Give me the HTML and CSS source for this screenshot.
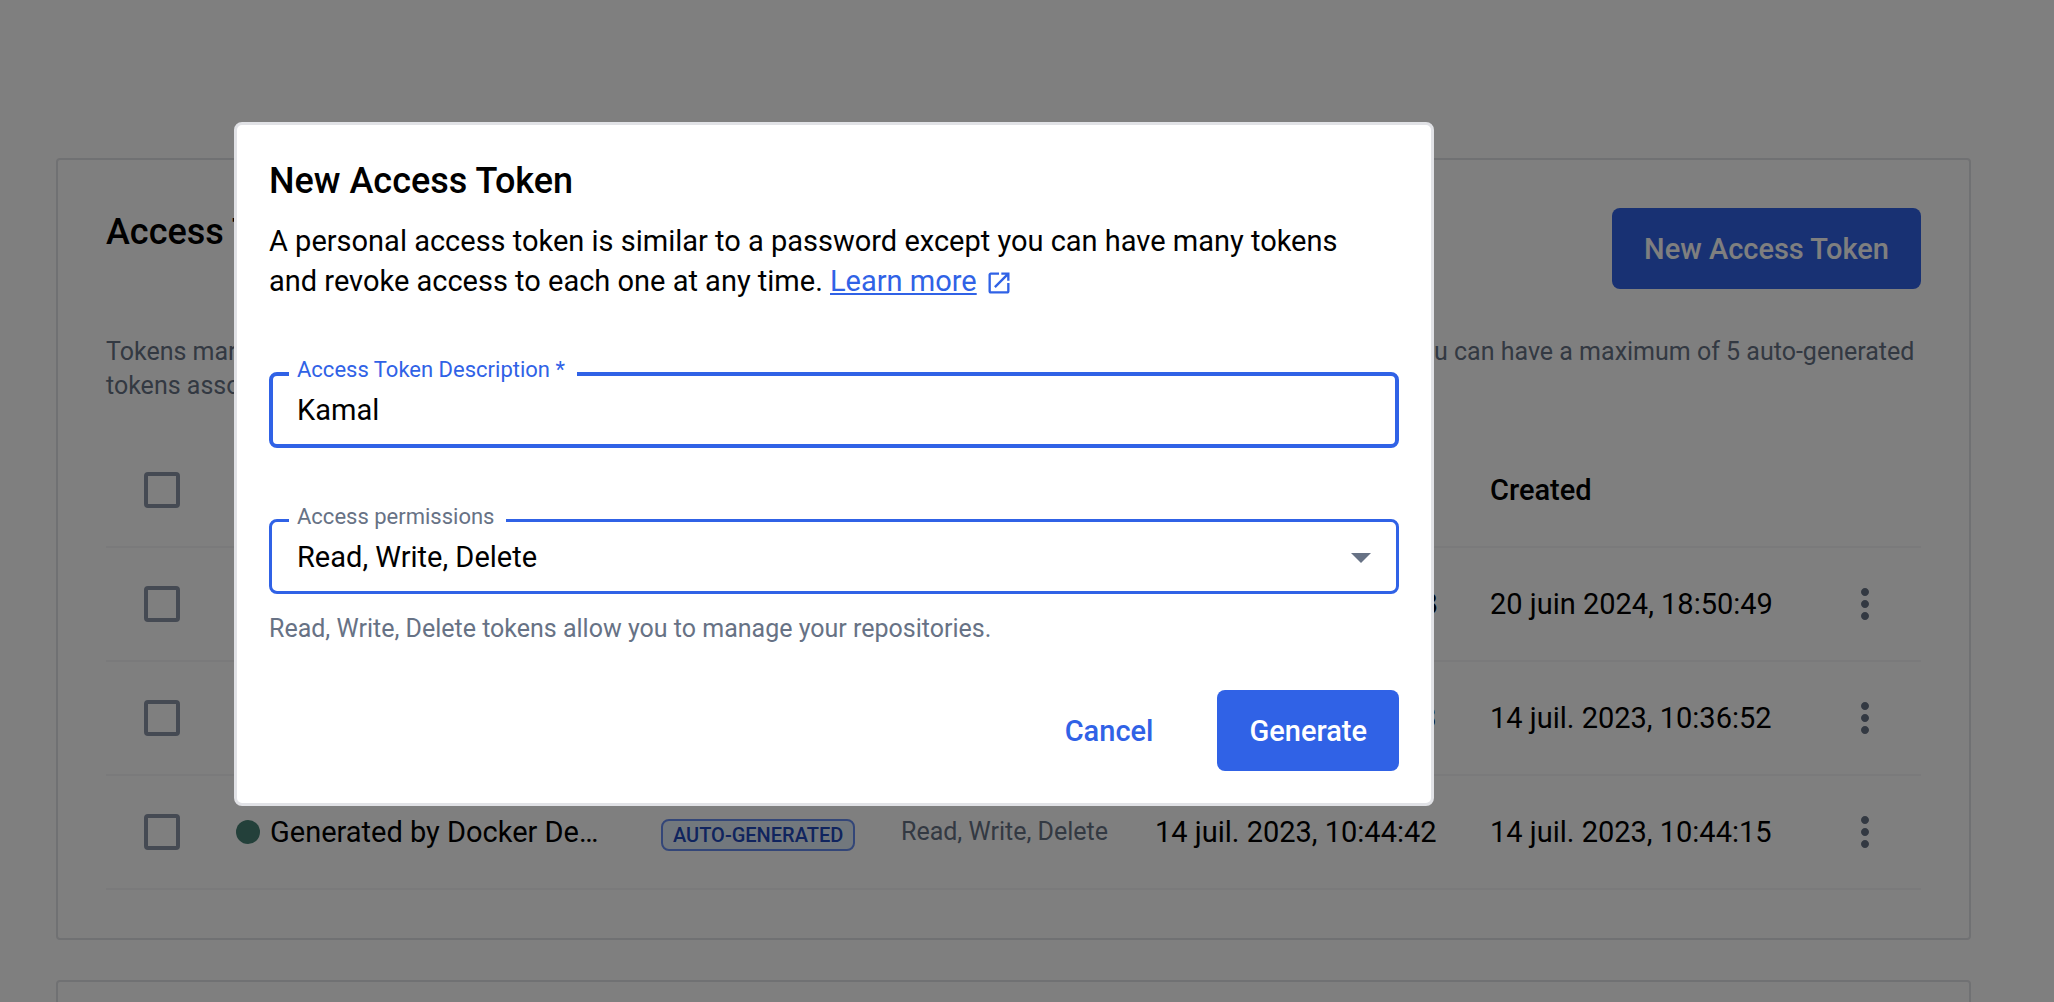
FILE: index.html
```html
<!DOCTYPE html>
<html lang="en">
<head>
<meta charset="utf-8">
<meta name="viewport" content="width=device-width, initial-scale=1">
<title>Access Tokens</title>
<link rel="stylesheet" href="styles.css">
</head>
<body>
<main class="page">
  <section class="card">
    <header class="card-header">
      <h2 class="title">Access Tokens</h2>
      <button class="button button-primary" type="button">New Access Token</button>
    </header>
    <p class="card-text">Tokens marked as auto-generated are created once you sign in through Docker Desktop or the Docker command line. You can have a maximum of 5 auto-generated tokens associated with your account.</p>
    <table class="tokens">
      <colgroup>
        <col class="col-check"><col class="col-name"><col class="col-source"><col class="col-scope"><col class="col-used"><col class="col-created"><col class="col-menu">
      </colgroup>
      <thead>
        <tr>
          <th><input class="check" type="checkbox" aria-label="Select all tokens"></th>
          <th>Description</th>
          <th>Source</th>
          <th>Scope</th>
          <th>Last Used</th>
          <th>Created</th>
          <th></th>
        </tr>
      </thead>
      <tbody>
        <tr>
          <td><input class="check" type="checkbox" aria-label="Select token"></td>
          <td><div class="name"><span class="dot"></span><span class="name-text">kamal</span></div></td>
          <td></td>
          <td class="scope">Read, Write, Delete</td>
          <td>20 juin 2024, 18:52:18</td>
          <td>20 juin 2024, 18:50:49</td>
          <td><button class="menu" type="button" aria-label="Token actions"><svg viewBox="0 0 24 24" width="48" height="48"><path d="M12 8c1.1 0 2-.9 2-2s-.9-2-2-2-2 .9-2 2 .9 2 2 2zm0 2c-1.1 0-2 .9-2 2s.9 2 2 2 2-.9 2-2-.9-2-2-2zm0 6c-1.1 0-2 .9-2 2s.9 2 2 2 2-.9 2-2-.9-2-2-2z"/></svg></button></td>
        </tr>
        <tr>
          <td><input class="check" type="checkbox" aria-label="Select token"></td>
          <td><div class="name"><span class="dot"></span><span class="name-text">Generated by Docker Desktop</span></div></td>
          <td><span class="badge">AUTO-GENERATED</span></td>
          <td class="scope">Read, Write, Delete</td>
          <td>14 juil. 2023, 10:36:53</td>
          <td>14 juil. 2023, 10:36:52</td>
          <td><button class="menu" type="button" aria-label="Token actions"><svg viewBox="0 0 24 24" width="48" height="48"><path d="M12 8c1.1 0 2-.9 2-2s-.9-2-2-2-2 .9-2 2 .9 2 2 2zm0 2c-1.1 0-2 .9-2 2s.9 2 2 2 2-.9 2-2-.9-2-2-2zm0 6c-1.1 0-2 .9-2 2s.9 2 2 2 2-.9 2-2-.9-2-2-2z"/></svg></button></td>
        </tr>
        <tr>
          <td><input class="check" type="checkbox" aria-label="Select token"></td>
          <td><div class="name"><span class="dot"></span><span class="name-text">Generated by Docker Desktop</span></div></td>
          <td><span class="badge">AUTO-GENERATED</span></td>
          <td class="scope">Read, Write, Delete</td>
          <td>14 juil. 2023, 10:44:42</td>
          <td>14 juil. 2023, 10:44:15</td>
          <td><button class="menu" type="button" aria-label="Token actions"><svg viewBox="0 0 24 24" width="48" height="48"><path d="M12 8c1.1 0 2-.9 2-2s-.9-2-2-2-2 .9-2 2 .9 2 2 2zm0 2c-1.1 0-2 .9-2 2s.9 2 2 2 2-.9 2-2-.9-2-2-2zm0 6c-1.1 0-2 .9-2 2s.9 2 2 2 2-.9 2-2-.9-2-2-2z"/></svg></button></td>
        </tr>
      </tbody>
    </table>
  </section>
  <section class="card"></section>
</main>

<div class="backdrop">
  <form class="dialog" role="dialog" aria-modal="true" aria-labelledby="dialog-title">
    <h2 class="title" id="dialog-title">New Access Token</h2>
    <p class="dialog-text">A personal access token is similar to a password except you can have many tokens and revoke access to each one at any time. <a class="link" href="#"><span class="link-text">Learn more</span><svg class="link-icon" viewBox="0 0 24 24" width="28" height="28"><path d="M19 19H5V5h7V3H5c-1.11 0-2 .9-2 2v14c0 1.100.89 2 2 2h14c1.100 0 2-.9 2-2v-7h-2v7zM14 3v2h3.590l-9.830 9.830 1.410 1.410L19 6.410V10h2V3h-7z"/></svg></a></p>
    <div class="field field-focused">
      <label class="label" for="description">Access Token Description *</label>
      <input class="control" id="description" type="text" value="Kamal">
    </div>
    <div class="field">
      <label class="label" for="permissions">Access permissions</label>
      <select class="control" id="permissions">
        <option>Read, Write, Delete</option>
        <option>Read, Write</option>
        <option>Read-only</option>
      </select>
      <svg class="arrow" viewBox="0 0 24 24" width="48" height="48"><path d="M7 10l5 5 5-5z"/></svg>
    </div>
    <p class="helper">Read, Write, Delete tokens allow you to manage your repositories.</p>
    <div class="actions">
      <button class="button button-text" type="button">Cancel</button>
      <button class="button button-primary" type="submit">Generate</button>
    </div>
  </form>
</div>
</body>
</html>
```
FILE: styles.css
```css
:root {
  --blue: #3062e6;
  --muted: #677285;
  --line: #e1e2e6;
}

* {
  box-sizing: border-box;
}

html,
body {
  margin: 0;
  height: 100%;
}

body {
  overflow: hidden;
  background: #fff;
  color: #000;
  font: 400 29px/40px Roboto, "Liberation Sans", sans-serif;
}

.page {
  display: flex;
  flex-direction: column;
  gap: 40px;
  padding: 158px 83px 0 56px;
}

.card {
  padding: 48px;
  border: 2px solid var(--line);
  border-radius: 4px;
}

.card-header {
  display: flex;
  align-items: flex-start;
  justify-content: space-between;
}

.title {
  margin: 0;
  font-size: 36px;
  font-weight: 500;
  line-height: 48px;
}

.button {
  height: 81px;
  padding: 0 32px;
  border: 0;
  border-radius: 8px;
  font: inherit;
  font-weight: 500;
}

.button-primary {
  background: var(--blue);
  color: #fff;
}

.button-text {
  background: none;
  color: var(--blue);
}

.card-text {
  margin: 46px 0 30px;
  color: var(--muted);
  font-size: 25px;
  line-height: 34px;
}

.tokens {
  width: 100%;
  table-layout: fixed;
  border-collapse: collapse;
}

.col-check { width: 130px; }
.col-name { width: 425px; }
.col-source { width: 240px; }
.col-scope { width: 254px; }
.col-used { width: 335px; }
.col-created { width: 326px; }

.tokens th,
.tokens td {
  height: 114px;
  padding: 0;
  border-bottom: 2px solid #f4f4f6;
  text-align: left;
  white-space: nowrap;
  font-weight: 400;
}

.tokens th {
  font-weight: 500;
}

.tokens td.scope {
  color: var(--muted);
  font-size: 25px;
}

.check {
  appearance: none;
  display: block;
  width: 36px;
  height: 36px;
  margin: 0 0 0 38px;
  border: 4px solid #8b95a7;
  border-radius: 4px;
}

.name {
  display: flex;
  align-items: center;
  gap: 10px;
  max-width: 366px;
}

.dot {
  flex: none;
  width: 24px;
  height: 24px;
  border-radius: 50%;
  background: #478075;
}

.name-text {
  overflow: hidden;
  text-overflow: ellipsis;
}

.badge {
  display: inline-block;
  padding: 0 10px;
  border: 2px solid #668cf0;
  border-radius: 8px;
  background: #e5f0fa;
  color: #2048bc;
  font-size: 20px;
  font-weight: 500;
  line-height: 28px;
}

.menu {
  display: block;
  width: 48px;
  height: 48px;
  margin-left: 25px;
  padding: 0;
  border: 0;
  background: none;
  fill: var(--muted);
}

.backdrop {
  position: fixed;
  inset: 0;
  padding: 122px 32px 0 234px;
  background: rgba(0, 0, 0, 0.5);
}

.dialog {
  max-width: 1200px;
  padding: 32px;
  border: 3px solid var(--line);
  border-radius: 8px;
  background: #fff;
}

.dialog-text {
  margin: 16px 0 71px;
  padding-right: 32px;
}

.link {
  color: var(--blue);
  text-decoration: none;
}

.link-text {
  text-decoration: underline;
}

.link-icon {
  margin-left: 8px;
  fill: currentColor;
  vertical-align: -6px;
}

.field {
  position: relative;
  margin-bottom: 18px;
}

.field-focused {
  margin-bottom: 71px;
}

.control {
  appearance: none;
  display: block;
  width: 100%;
  height: 75px;
  padding: 0 25px;
  border: 3px solid var(--blue);
  border-radius: 8px;
  outline: 0;
  background: #fff;
  color: inherit;
  font: inherit;
}

.field-focused .control {
  height: 76px;
  padding: 0 24px;
  border-width: 4px;
}

.label {
  position: absolute;
  top: -16px;
  left: 20px;
  padding: 0 12px 0 8px;
  background: #fff;
  color: var(--muted);
  font-size: 22px;
  line-height: 28px;
}

.field-focused .label {
  color: var(--blue);
}

.arrow {
  position: absolute;
  top: 14px;
  right: 14px;
  fill: var(--muted);
  pointer-events: none;
}

.helper {
  margin: 0;
  color: var(--muted);
  font-size: 25px;
  line-height: 34px;
}

.actions {
  display: flex;
  justify-content: flex-end;
  gap: 32px;
  margin-top: 44px;
}
```
